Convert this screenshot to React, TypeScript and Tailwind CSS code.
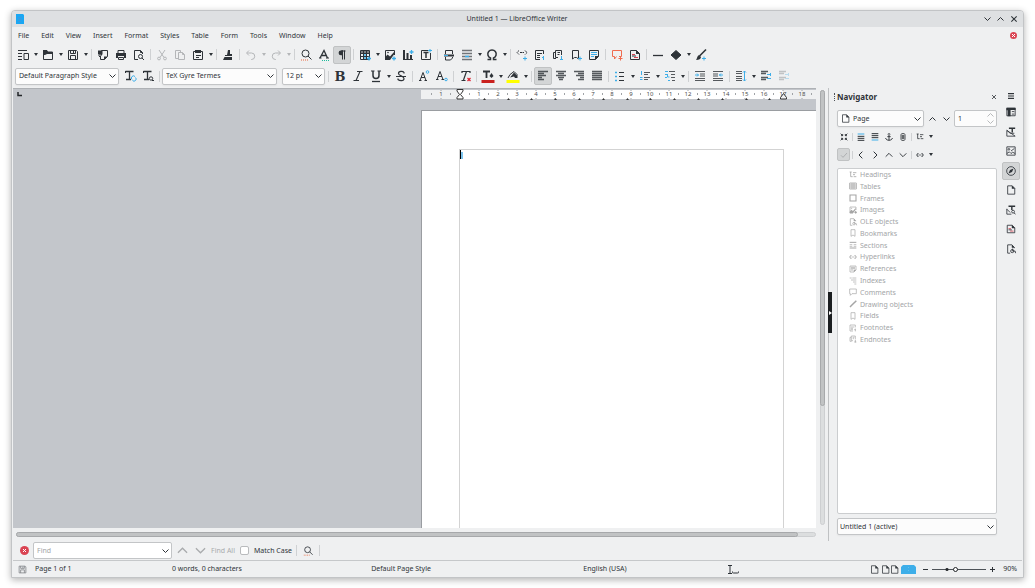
import React, { useState } from 'react';

const BLUE = '#3daee9';
const RED = '#da4453';

const menus = ['File', 'Edit', 'View', 'Insert', 'Format', 'Styles', 'Table', 'Form', 'Tools', 'Window', 'Help'];

const serif = '"DejaVu Serif", "Liberation Serif", serif';
const sans = '"Noto Sans", "Open Sans", sans-serif';

// All glyphs are drawn on a 12x12 grid
const icons: Record<string, React.ReactNode> = {
  templates: (
    <>
      <path d="M1 1.5h9M1 4.5h4M1 7.5h4M1 10.5h4" />
      <path d="M7 4.5h4.5v6H7z" />
    </>
  ),
  open: (
    <>
      <path d="M1.5 10.5v-9h3l1 1.5h5v7.5z" />
      <path d="M1 1h4l1 2h5v2H5L3 6H1z" fill="currentColor" stroke="none" />
    </>
  ),
  save: (
    <>
      <path d="M1.5 1.5h8l1 1v8h-9z" />
      <path d="M3.5 1.5v3h5v-3M3.5 10.5v-4h5v4M6.5 2v2" />
    </>
  ),
  exportPdf: (
    <>
      <path d="M4.5 6V1.5h6v6l-3 3h-4V8" />
      <path d="M1 1.5h4.5v4H1zM7 11V7.5h3.5z" fill="currentColor" stroke="none" />
      <path d="M3 5v2.500M1.5 6.5L3 8l1.500-1.500" />
    </>
  ),
  print: (
    <>
      <path d="M3 4V1.5h6V4M3.5 8.5v2h5v-2z" />
      <path d="M1 4h10v5H9V7H3v2H1z" fill="currentColor" stroke="none" />
    </>
  ),
  preview: (
    <>
      <path d="M5 10.5H1.5v-9h6l2 2V5" />
      <circle cx="7.5" cy="7.5" r="2" />
      <path d="M9 9l2 2M7.5 1.5v2h2" />
    </>
  ),
  cut: (
    <>
      <path d="M3 1l5 7.5M9 1L4 8.5" />
      <circle cx="3" cy="9.5" r="1.4" />
      <circle cx="9" cy="9.5" r="1.4" />
    </>
  ),
  copy: <path d="M4 9.5H1.5v-8h5v1.5M4.5 3.5h4l2 2v5h-6zM8.5 3.5v2h2" />,
  paste: (
    <>
      <path d="M1.5 2.5h9v8h-9z" />
      <path d="M3 1h6v3H3zM4 6h5v1H4zM4 8h3v1H4z" fill="currentColor" stroke="none" />
    </>
  ),
  clone: (
    <path d="M6 1h2v4h2v2H3V6h2zM2.5 8H10v3H1z" fill="currentColor" stroke="none" />
  ),
  undo: <path d="M4 1.5L1.5 4 4 6.5M2 4h4.5a3 3 0 0 1 0 6.5H6" />,
  redo: <path d="M8 1.5L10.5 4 8 6.5M10 4H5.5a3 3 0 0 0 0 6.5H6" />,
  find: (
    <>
      <circle cx="5.5" cy="4.5" r="3.5" />
      <path d="M8 7l3.5 3.5" />
      <path d="M1 11h7" stroke="#e9643a" strokeDasharray="1 1" />
    </>
  ),
  spelling: (
    <>
      <path d="M2 9l4-7.500L9.500 9M3.500 6.500h5" strokeWidth="1.300" />
      <path d="M1 9h2.500M8 9h3" />
      <path d="M4 11.5h7" stroke="#1abc9c" strokeDasharray="1 1" />
    </>
  ),
  marks: (
    <>
      <path d="M7 1.5H5a2.4 2.4 0 0 0 0 4.800h2z" fill="currentColor" stroke="none" />
      <path d="M6.5 1.5v9M8.5 1.5v9M5 2h4.5" />
    </>
  ),
  table: (
    <>
      <path d="M1.5 1.5h9v9h-9zM1.5 4.5h9M1.5 7.5h9M4.500 1.5v9M7.500 1.5v9" />
      <path d="M2 2h8v2H2z" fill="currentColor" stroke="none" opacity=".6" />
      <path d="M5 6h2M5 9h2" stroke={BLUE} strokeWidth="1.500" />
      <path d="M8 9.500h4M10 7.500v4" stroke={BLUE} strokeWidth="1.300" />
    </>
  ),
  image: (
    <>
      <path d="M10.500 6V1.5h-9v9H6" />
      <path d="M1 11V8.500l2.500-3 2.500 2L10 3v2.500L6 11z" fill="currentColor" stroke="none" />
      <circle cx="4" cy="3.500" r=".8" fill="currentColor" stroke="none" />
      <path d="M8 9.500h4M10 7.500v4" stroke={BLUE} strokeWidth="1.300" />
    </>
  ),
  chart: (
    <>
      <path d="M1 10.5h10" />
      <path d="M1 1h2v9H1zM4.500 4h2v6h-2zM8 6h2v4H8z" fill="currentColor" stroke="none" />
      <path d="M7.500 3h4M9.500 1v4" stroke={BLUE} strokeWidth="1.300" />
    </>
  ),
  textbox: (
    <>
      <path d="M8 1.5H1.5v9h9V4" />
      <path d="M3.5 3.5h5M6 3.5v5.500" strokeWidth="1.500" />
      <path d="M8 1.5h4M10 0v3.500" stroke={BLUE} />
    </>
  ),
  pagebreak: (
    <>
      <path d="M2.5 5V1.500h7V5M2.500 8v3h5l2-2V8" />
      <path d="M1 6.500h10" strokeWidth="2" />
      <path d="M1 6.500h4" stroke={BLUE} strokeWidth="1" />
    </>
  ),
  field: (
    <>
      <path d="M1 1.5h10M1 4.5h10M1 7.5h10M1 10.5h10" strokeWidth="1.5" opacity=".65" />
      <path d="M4 7.5h4" stroke={BLUE} strokeWidth="1.5" />
    </>
  ),
  omega: <path d="M1.5 10.5h3V9A4.200 4.200 0 1 1 7.5 9v1.5h3" strokeWidth="1.5" />,
  link: (
    <>
      <path d="M3 1.5l-2 2 2 2M9 1.5l2 2-2 2M4 3.5h4" strokeDasharray="2 .5" />
      <path d="M7 9.5h4M9 7.5v4" stroke={BLUE} />
    </>
  ),
  footnote: (
    <>
      <path d="M9.5 5V1.5h-8v9H6M3 4.5h5M3 6.5h3M3 8.500h3" />
      <path d="M9.5 7v4M8 8.5h1.5" stroke={BLUE} />
    </>
  ),
  endnote: (
    <>
      <path d="M4 9.5H1.5v-6H3M3.5 1.5h6V6M3.5 1.5v7H6M5.5 3.5h2.500M5.500 5.500h2" />
      <path d="M9.500 7v4M8 10.500h3" stroke={BLUE} />
    </>
  ),
  bookmarkAdd: (
    <>
      <path d="M2.5 1.5h6v8.500l-2-1.5h-2l-2 1.5z" />
      <path d="M8 9.500h4M10 7.500v4" stroke={BLUE} />
    </>
  ),
  crossref: (
    <>
      <path d="M1.5 1.5h9v6l-3 3h-6z" />
      <path d="M3 3.5h6M3 5.5h6M3 7.5h3" stroke={BLUE} />
      <path d="M7 11V7h4z" fill="currentColor" stroke="none" />
    </>
  ),
  comment: <path d="M1.5 1.5h9v6H8M1.5 1.5v6h2v2.5l2-2.5M7.5 9.500h4M9.500 7.500v4" stroke="#f06b4f" />,
  track: (
    <>
      <path d="M1.5 1.5h6l3 3v6h-9z" />
      <path d="M7 1v4h4z" fill="currentColor" stroke="none" />
      <path d="M3 5.5h3M5 8.5h4" stroke={RED} />
      <path d="M3 7h4" />
    </>
  ),
  line: <path d="M1 6.5h10" strokeWidth="1.300" />,
  shapes: <path d="M6 1.5L11 6l-5 4.5L1 6z" fill="currentColor" />,
  draw: (
    <>
      <path d="M11 .5L4.5 7" strokeWidth="1.6" />
      <path d="M4 6l2 2c0 2-2 3-5 3 1-1 1-4 3-5z" fill="currentColor" stroke="none" />
      <path d="M7 9.5h4M9 7.5v4" stroke={BLUE} />
    </>
  ),
  updateStyle: (
    <>
      <path d="M1.5 1.5h8M5.5 1.5v8M2 9.5h5" strokeWidth="1.3" />
      <path d="M1.500 1v2" />
      <path d="M8 9.5a2 2 0 0 1 3-3M11.5 7.5a2 2 0 0 1-3 3" stroke={BLUE} />
    </>
  ),
  newStyle: (
    <>
      <path d="M1.5 1.5h8M5.5 1.5v8M2 9.5h5" strokeWidth="1.3" />
      <path d="M1.500 1v2" />
      <circle cx="9" cy="8.500" r="1.7" />
      <path d="M10 10.5h2" />
    </>
  ),
  bold: (
    <text x="6" y="11" fontSize="13" fontWeight="700" textAnchor="middle" fontFamily={serif} fill="currentColor" stroke="none">B</text>
  ),
  italic: <path d="M5 1.5h5.5M1.5 10.5H7M8 1.5l-4 9" strokeWidth="1.100" />,
  underline: (
    <>
      <path d="M1 1h3.5M7.5 1H11" />
      <path d="M3 1v4.500a3 3 0 0 0 6 0V1" strokeWidth="1.500" />
      <path d="M2 11.500h8" strokeWidth="1.300" />
    </>
  ),
  strike: (
    <>
      <path d="M9 3.5v-1C8 1 3.5 .8 3.500 3.5S9 5.5 9 8.5 4.5 11 3 9.500v-1" strokeWidth="1.2" />
      <path d="M1 6.5h10" />
    </>
  ),
  superscript: (
    <>
      <path d="M1 10.5h2.500M6.500 10.500H9M2 10.500l3-8 3 8M3 7.500h4" />
      <circle cx="9.500" cy="2" r="1.300" stroke={BLUE} />
    </>
  ),
  subscript: (
    <>
      <path d="M0 9.5h2.500M5.500 9.500H8M1 9.500l3-8 3 8M2 6.500h4" />
      <circle cx="10" cy="9.500" r="1.300" stroke={BLUE} />
    </>
  ),
  clear: (
    <>
      <path d="M3 1.500h8M3 1v2M11 1v2M7.500 1.500l-3 8.500M2.500 10.500h4" strokeWidth="1.200" />
      <path d="M8.500 8l3 3M11.500 8l-3 3" stroke="#e0202f" strokeWidth="1.200" />
    </>
  ),
  fontColor: (
    <>
      <path d="M1 1.500h7M4.500 1.500v6.500" strokeWidth="1.800" />
      <path d="M9.500 3l2 3-2 2-2-2z" fill="currentColor" stroke="none" />
      <path d="M-.5 11.500h13" stroke="#c9211e" strokeWidth="3" />
    </>
  ),
  highlight: (
    <>
      <path d="M1 8l2-3.500 4-3 3 3V8" />
      <path d="M3 7.500l4-5 3 3V8H8L7 6.500z" fill="currentColor" stroke="none" />
      <path d="M-.5 11.500h13" stroke="#ffff00" strokeWidth="3" />
    </>
  ),
  alignLeft: <path d="M1 1.5h10M1 3.5h6M1 5.5h8M1 7.5h4M1 9.5h6" strokeWidth="1.3" opacity=".8" />,
  alignCenter: <path d="M1 1.5h10M3 3.5h6M1 5.5h10M3 7.5h6M4 9.5h4" strokeWidth="1.3" opacity=".8" />,
  alignRight: <path d="M1 1.5h10M5 3.5h6M3 5.5h8M7 7.5h4M5 9.5h6" strokeWidth="1.3" opacity=".8" />,
  justify: <path d="M1 1.5h10M1 3.5h10M1 5.5h10M1 7.5h10M1 9.5h10" strokeWidth="1.3" opacity=".8" />,
  bullets: (
    <>
      <path d="M5 2.5h5M5 6.5h5M5 10.5h5" />
      <path d="M1 2.5h2M1 6.5h2M1 10.5h2" stroke={BLUE} strokeWidth="1.6" />
    </>
  ),
  numbering: (
    <>
      <path d="M5 2.5h6M5 4.5h4M5 7.5h6M5 9.5h4" strokeWidth="1.2" opacity=".8" />
      <path d="M2.500 1v4M1 7.500h2.500M1 9.500h2.500" stroke={BLUE} />
    </>
  ),
  outline: (
    <>
      <path d="M5 1.5h6M7 4.5h4M7 7.5h4M8 10.5h3" strokeWidth="1.2" opacity=".8" />
      <path d="M1 1.5h3M1 4.500h2M3.5 4v3h2M1 7.5h2M4 10.5h2" stroke={BLUE} />
    </>
  ),
  indent: (
    <>
      <path d="M1 1.5h10M6 4h5M6 6h5M1 10.5h10M1 8.5h10" strokeWidth="1.2" opacity=".8" />
      <path d="M1 5h3.500M3 3.500L4.500 5 3 6.500" stroke={BLUE} />
    </>
  ),
  outdent: (
    <>
      <path d="M1 1.5h10M1 4h5M1 6h5M1 10.5h10M1 8.5h10" strokeWidth="1.2" opacity=".8" />
      <path d="M7 5h4M9 3.500L7.500 5 9 6.500" stroke={BLUE} />
    </>
  ),
  spacing: (
    <>
      <path d="M1 1.500h6M1 3.500h6M1 6.500h6M1 8.500h6M1 10.500h6" opacity=".8" />
      <path d="M9.500 1v10M8 2.500L9.500 1 11 2.500M8 9.500L9.500 11 11 9.500" stroke={BLUE} />
    </>
  ),
  increase: (
    <>
      <path d="M1 1.500h7M1 3.500h5M1 7.500h7M1 9.500h5" strokeWidth="1.5" opacity=".8" />
      <path d="M7 4.500h4M7 8.500h4M10.500 3v3" stroke={BLUE} />
    </>
  ),
  contract: (
    <path
      d="M1 1l3 3M4 1.5V4H1.5M11 1L8 4M8 1.5V4h2.5M1 11l3-3M4 10.5V8H1.5M11 11L8 8M8 10.5V8h2.5"
      strokeWidth="1.4"
    />
  ),
  header: (
    <>
      <path d="M1 5h10M1 8h10M1 11h10" strokeWidth="1.5" />
      <path d="M1 1.500h10" stroke={BLUE} strokeWidth="1.5" />
    </>
  ),
  footer: (
    <>
      <path d="M1 1h10M1 4h10M1 7h10" strokeWidth="1.5" />
      <path d="M1 10.500h10" stroke={BLUE} strokeWidth="1.5" />
    </>
  ),
  anchor: (
    <>
      <circle cx="6" cy="2" r="1.4" />
      <path d="M6 3.500v7.500M3.5 5.500h5M1 7.500c0 4.500 10 4.500 10 0" strokeWidth="1.4" />
    </>
  ),
  clip: <path d="M3 2.5L4 1h4l1 1.5v7L8 11H4L3 9.500zM5 3v6M7 3v6" strokeWidth="1.3" />,
  levels: <path d="M1 1.5h3M2.5 1.5v7h3M6 2.5h5M6 5.5h3M7 8.5h4" strokeWidth="1.2" />,
  check: <path d="M1.5 6.5l3 3 6-6.500" />,
  left: <path d="M8 1L3 6l5 5" strokeWidth="1.5" />,
  right: <path d="M4 1l5 5-5 5" strokeWidth="1.5" />,
  up: <path d="M1 8.500l5-5 5 5" strokeWidth="1.4" />,
  down: <path d="M1 3.500l5 5 5-5" strokeWidth="1.4" />,
  linkNav: <path d="M3.5 3L1 6l2.5 3M8.5 3L11 6 8.500 9M4 6h1.500M6.500 6H8" strokeWidth="1.5" />,
  close: <path d="M2 2l8 8M10 2l-8 8" strokeWidth="1.6" />,
  hamburger: <path d="M1.5 2.500h9M1.500 6h9M1.500 9.500h9" strokeWidth="1.7" />,
  properties: (
    <>
      <path d="M1 1.5h10v9H1zM7 5.500h3M7 8.500h3" />
      <path d="M.5 1h11v2.500H5.500V11H2V4H.5z" fill="currentColor" stroke="none" />
    </>
  ),
  styles: (
    <>
      <path d="M3.500 1.500H11M7.500 1.500v5" strokeWidth="1.700" />
      <path d="M1 4v7h10zM1 4l4 3.500h5" />
    </>
  ),
  gallery: (
    <>
      <path d="M1 1h10v10H1zM1 9l3-2 2 2 2-1.500L11 9" />
      <circle cx="3.500" cy="4" r="1" />
      <path d="M6 6l4-3" />
    </>
  ),
  compass: (
    <>
      <circle cx="6" cy="6" r="5.200" />
      <path d="M9 3L7.200 7.200 3 9l1.800-4.200z" fill="currentColor" stroke="none" />
    </>
  ),
  page: (
    <>
      <path d="M2 1h5.500L10.500 4v7H2z" />
      <path d="M7 .5v4h4z" fill="currentColor" stroke="none" />
    </>
  ),
  inspector: (
    <>
      <path d="M3 1.500h8M7 1.500V6" strokeWidth="1.700" />
      <path d="M1 4.500V11h5.500M1 5l4 4" />
      <circle cx="8.500" cy="8" r="1.700" />
      <path d="M9.500 9.500l2 1.500" />
    </>
  ),
  access: (
    <>
      <path d="M5 11H2V1h5l3 3v1" />
      <path d="M7 .5v4h3.500z" fill="currentColor" stroke="none" />
      <circle cx="7.500" cy="8.500" r="1.900" />
      <path d="M8 5.500v3h3l.5 2.500" />
    </>
  ),
  frame: <path d="M1.500 1.500h9v9h-9z" strokeWidth="1.6" />,
  grid: <path d="M1 1.500h10v9H1zM1 4.500h10M1 7.500h10M4.500 1.500v9M7.500 1.500v9" strokeWidth="1.200" />,
  bookmark: <path d="M3 1h6v10L6 9l-3 2z" />,
  section: (
    <>
      <path d="M1 2h10M1 10.5h10" strokeWidth="1.5" />
      <path d="M1 5.5h4M7 5.5h4M1 8h4M7 8h4" />
    </>
  ),
  index: <path d="M1 1.5h3M5 1.5h6M3 4.5h8M6 7.5h5M8 10.5h3" />,
  bubble: <path d="M1 1.500h10v7H4.500L2 11V8.500H1z" />,
  pen: <path d="M11 1L4 8l-2.500 2.500" strokeWidth="2.200" />,
};

const Icon: React.FC<{ name: string; size?: number }> = ({ name, size = 12 }) => (
  <svg
    width={size}
    height={size}
    viewBox="0 0 12 12"
    fill="none"
    stroke="currentColor"
    className="shrink-0 overflow-visible"
    aria-hidden="true"
  >
    {icons[name]}
  </svg>
);

const Chevron: React.FC<{ up?: boolean }> = ({ up }) => (
  <svg width="7" height="4" viewBox="0 0 7 4" fill="none" stroke="currentColor" className="shrink-0" aria-hidden="true">
    <path d={up ? 'M.5 3.5l3-3 3 3' : 'M.5 .5l3 3 3-3'} />
  </svg>
);

interface Tool {
  icon: string;
  label: string;
  menu?: boolean;
  disabled?: boolean;
  active?: boolean;
}

const standardTools: (Tool | null)[] = [
  { icon: 'templates', label: 'New', menu: true },
  { icon: 'open', label: 'Open', menu: true },
  { icon: 'save', label: 'Save', menu: true },
  null,
  { icon: 'exportPdf', label: 'Export as PDF' },
  { icon: 'print', label: 'Print' },
  { icon: 'preview', label: 'Print Preview' },
  null,
  { icon: 'cut', label: 'Cut', disabled: true },
  { icon: 'copy', label: 'Copy', disabled: true },
  { icon: 'paste', label: 'Paste', menu: true },
  null,
  { icon: 'clone', label: 'Clone Formatting' },
  null,
  { icon: 'undo', label: 'Undo', menu: true, disabled: true },
  { icon: 'redo', label: 'Redo', menu: true, disabled: true },
  null,
  { icon: 'find', label: 'Find and Replace' },
  { icon: 'spelling', label: 'Spelling' },
  { icon: 'marks', label: 'Formatting Marks', active: true },
  null,
  { icon: 'table', label: 'Insert Table', menu: true },
  { icon: 'image', label: 'Insert Image' },
  { icon: 'chart', label: 'Insert Chart' },
  { icon: 'textbox', label: 'Insert Text Box' },
  null,
  { icon: 'pagebreak', label: 'Insert Page Break' },
  { icon: 'field', label: 'Insert Field', menu: true },
  { icon: 'omega', label: 'Insert Special Character', menu: true },
  null,
  { icon: 'link', label: 'Insert Hyperlink' },
  { icon: 'footnote', label: 'Insert Footnote' },
  { icon: 'endnote', label: 'Insert Endnote' },
  { icon: 'bookmarkAdd', label: 'Insert Bookmark' },
  { icon: 'crossref', label: 'Insert Cross-reference' },
  null,
  { icon: 'comment', label: 'Insert Comment' },
  { icon: 'track', label: 'Track Changes' },
  null,
  { icon: 'line', label: 'Insert Line' },
  { icon: 'shapes', label: 'Basic Shapes', menu: true },
  { icon: 'draw', label: 'Show Draw Functions' },
];

const formatTools: (Tool | null)[] = [
  { icon: 'bold', label: 'Bold' },
  { icon: 'italic', label: 'Italic' },
  { icon: 'underline', label: 'Underline', menu: true },
  { icon: 'strike', label: 'Strikethrough' },
  null,
  { icon: 'superscript', label: 'Superscript' },
  { icon: 'subscript', label: 'Subscript' },
  null,
  { icon: 'clear', label: 'Clear Formatting' },
  null,
  { icon: 'fontColor', label: 'Font Color', menu: true },
  { icon: 'highlight', label: 'Highlighting', menu: true },
  null,
  { icon: 'alignLeft', label: 'Align Left', active: true },
  { icon: 'alignCenter', label: 'Align Center' },
  { icon: 'alignRight', label: 'Align Right' },
  { icon: 'justify', label: 'Justified' },
  null,
  { icon: 'bullets', label: 'Bullets', menu: true },
  { icon: 'numbering', label: 'Numbering', menu: true },
  { icon: 'outline', label: 'Outline Format', menu: true },
  null,
  { icon: 'indent', label: 'Increase Indent' },
  { icon: 'outdent', label: 'Decrease Indent' },
  null,
  { icon: 'spacing', label: 'Line Spacing', menu: true },
  { icon: 'increase', label: 'Increase Paragraph Spacing' },
  { icon: 'increase', label: 'Decrease Paragraph Spacing', disabled: true },
];

const ToolRow: React.FC<{ tools: (Tool | null)[] }> = ({ tools }) => (
  <div className="flex items-center">
    {tools.map((tool, i) =>
      tool === null ? (
        <span key={i} className="flex w-[5px] justify-center">
          <span className="h-[11px] w-px bg-[#cfd1d3]" />
        </span>
      ) : (
        <React.Fragment key={i}>
          <button
            type="button"
            aria-label={tool.label}
            disabled={tool.disabled}
            className={`flex h-[18px] w-[18px] items-center justify-center rounded-[2px] disabled:opacity-30 ${
              tool.active ? 'border border-[#c0c2c3] bg-[#d3d5d6]' : ''
            }`}
          >
            <Icon name={tool.icon} />
          </button>
          {tool.menu && (
            <button
              type="button"
              aria-label={`${tool.label} options`}
              disabled={tool.disabled}
              className="flex h-[18px] w-[7px] items-center justify-center disabled:opacity-30"
            >
              <svg width="4" height="3" viewBox="0 0 4 3" fill="currentColor" aria-hidden="true">
                <path d="M0 0h4L2 3z" />
              </svg>
            </button>
          )}
        </React.Fragment>
      )
    )}
  </div>
);

const Combo: React.FC<{ label: string; value: string; className: string; selectClass?: string; icon?: string }> = ({
  label,
  value,
  className,
  selectClass = 'pl-[3px]',
  icon,
}) => (
  <div className={`relative flex h-[17px] items-center rounded-[2px] border border-[#c3c5c7] bg-[#fcfcfc] shadow-xs ${className}`}>
    {icon && (
      <span className="pointer-events-none absolute left-[3px]">
        <Icon name={icon} size={9} />
      </span>
    )}
    <select aria-label={label} className={`h-full w-full appearance-none bg-transparent outline-none ${selectClass}`}>
      <option>{value}</option>
    </select>
    <span className="pointer-events-none absolute right-[2px]">
      <Chevron />
    </span>
  </div>
);

const navItems = [
  { icon: 'levels', label: 'Headings' },
  { icon: 'grid', label: 'Tables' },
  { icon: 'frame', label: 'Frames' },
  { icon: 'image', label: 'Images' },
  { icon: 'access', label: 'OLE objects' },
  { icon: 'bookmark', label: 'Bookmarks' },
  { icon: 'section', label: 'Sections' },
  { icon: 'linkNav', label: 'Hyperlinks' },
  { icon: 'crossref', label: 'References' },
  { icon: 'index', label: 'Indexes' },
  { icon: 'bubble', label: 'Comments' },
  { icon: 'pen', label: 'Drawing objects' },
  { icon: 'bookmark', label: 'Fields' },
  { icon: 'footnote', label: 'Footnotes' },
  { icon: 'endnote', label: 'Endnotes' },
];

const sideTabs = [
  { icon: 'properties', label: 'Properties' },
  { icon: 'styles', label: 'Styles' },
  { icon: 'gallery', label: 'Gallery' },
  { icon: 'compass', label: 'Navigator' },
  { icon: 'page', label: 'Page' },
  { icon: 'inspector', label: 'Style Inspector' },
  { icon: 'track', label: 'Manage Changes' },
  { icon: 'access', label: 'Accessibility Check' },
];

const SmallButton: React.FC<{ icon: string; label: string }> = ({ icon, label }) => (
  <button type="button" aria-label={label} className="flex h-[13px] w-[14px] items-center justify-center">
    <Icon name={icon} size={8} />
  </button>
);

const SmallArrow: React.FC<{ label: string }> = ({ label }) => (
  <button type="button" aria-label={label} className="flex h-[13px] w-[7px] items-center justify-center">
    <svg width="4" height="3" viewBox="0 0 4 3" fill="currentColor" aria-hidden="true">
      <path d="M0 0h4L2 3z" />
    </svg>
  </button>
);

const SmallSep = () => <span className="mx-px h-[8px] w-px bg-[#cfd1d3]" />;

// One centimetre is 19 units, zero sits at the left text margin
const Ruler = () => {
  const unit = 19;
  const zero = 39;
  const numbers = Array.from({ length: 20 }, (_, i) => i - 1).filter((n) => n !== 0 && n < 19);
  const halves = Array.from({ length: 21 }, (_, i) => zero + (i - 2) * unit + 9).filter((x) => x > 4 && x < 392);
  const tabs = Array.from({ length: 13 }, (_, i) => zero + Math.round((i + 1) * 23.8));

  return (
    <svg width="395" height="11" viewBox="0 0 395 11" className="block overflow-visible" role="img" aria-label="Ruler">
      <rect x="0" y="0" width="395" height="9" fill="#eff0f1" />
      <rect x={zero} y="0" width={17 * unit} height="9" fill="#fff" />
      {halves.map((x) => (
        <path key={x} d={`M${x + 0.5} 3v2`} stroke="#a0a3a6" />
      ))}
      {numbers.map((n) => (
        <g key={n}>
          <path d={`M${zero + n * unit} 0v1M${zero + n * unit} 8v1`} stroke="#a0a3a6" />
          <text x={zero + n * unit} y="6" fontSize="6" textAnchor="middle" fill="#4d4d4d" fontFamily={sans}>
            {Math.abs(n)}
          </text>
        </g>
      ))}
      {tabs.map((x) => (
        <path key={x} d={`M${x - 1} 10l1.500-2 1.500 2z`} fill="#333" />
      ))}
      <path d="M36-.5h6v1.500L39.500 4.500 42 7.500V9h-6V7.500l2.500-3L36 1z" fill="#fff" stroke="#333" />
      <path d="M359.5 9V7.500L362.500 3.500l3 4V9z" fill="#eff0f1" stroke="#333" />
    </svg>
  );
};

const NavigatorPanel = () => {
  const [page, setPage] = useState('1');

  return (
    <section className="flex w-[160px] flex-col">
      <div className="flex h-[17px] items-center justify-between">
        <h2 className="text-[8px] font-bold">Navigator</h2>
        <button type="button" aria-label="Close Sidebar Deck" className="flex w-[6px]">
          <Icon name="close" size={6} />
        </button>
      </div>

      <div className="mt-[5px] flex h-[17px] items-center">
        <Combo label="Navigate by" value="Page" icon="page" className="w-[87px]" selectClass="pl-[15px]" />
        <div className="flex flex-1 items-center justify-center gap-[7px]">
          <button type="button" aria-label="Previous page">
            <Chevron up />
          </button>
          <button type="button" aria-label="Next page">
            <Chevron />
          </button>
        </div>
        <div className="flex h-[17px] w-[43px] items-center rounded-[2px] border border-[#c3c5c7] bg-[#fcfcfc] pr-[2px]">
          <input
            aria-label="Page number"
            value={page}
            onChange={(e) => setPage(e.target.value)}
            className="w-full min-w-0 bg-transparent pl-[3px] outline-none"
          />
          <span className="flex flex-col gap-[3px] text-[#b8babc]">
            <Chevron up />
            <Chevron />
          </span>
        </div>
      </div>

      <div className="mt-[3px] flex h-[13px] items-center">
        <SmallButton icon="contract" label="Collapse" />
        <SmallSep />
        <SmallButton icon="header" label="Header" />
        <SmallButton icon="footer" label="Footer" />
        <SmallButton icon="anchor" label="Anchor" />
        <SmallButton icon="clip" label="Set Reminder" />
        <SmallSep />
        <SmallButton icon="levels" label="Heading Levels" />
        <SmallArrow label="Heading Levels options" />
      </div>

      <div className="mt-[5px] flex h-[13px] items-center">
        <button
          type="button"
          aria-label="Content View"
          className="mr-px flex h-[13px] w-[13px] items-center justify-center rounded-[2px] border border-[#c0c2c3] bg-[#d3d5d6] text-[#9a9c9e]"
        >
          <Icon name="check" size={8} />
        </button>
        <SmallSep />
        <SmallButton icon="left" label="Back" />
        <SmallButton icon="right" label="Forward" />
        <SmallButton icon="up" label="Promote" />
        <SmallButton icon="down" label="Demote" />
        <SmallSep />
        <SmallButton icon="linkNav" label="Drag Mode" />
        <SmallArrow label="Drag Mode options" />
      </div>

      <div className="mt-[7px] flex-1 rounded-[2px] border border-[#cbcdcf] bg-white text-[#a3a5a7]">
        <ul className="flex h-[176px] flex-col justify-between pl-[11px] [&_svg]:grayscale">
          {navItems.map((item) => (
            <li key={item.label} className="flex items-center gap-[3px] leading-[11px]">
              <Icon name={item.icon} size={8} />
              {item.label}
            </li>
          ))}
        </ul>
      </div>

      <Combo label="Document" value="Untitled 1 (active)" className="mt-[4px] mb-[6px] w-full" selectClass="pl-[2px]" />
    </section>
  );
};

const App: React.FC = () => {
  const [find, setFind] = useState('');
  const [zoom, setZoom] = useState(43);

  return (
    <div className="flex min-h-screen bg-white px-[11px] py-[10px] font-['Noto_Sans',sans-serif] text-[7px] leading-[10px] text-[#2e3338]">
      <div className="flex min-w-0 flex-1 flex-col rounded-t-[4px] border border-[#c2c4c6] bg-[#eff0f1] shadow-[0_2px_7px_rgba(0,0,0,0.3)]">
        {/* Title bar */}
        <header className="flex h-[16px] items-center justify-between rounded-t-[3px] bg-[#dee0e2] pr-[5px] pl-[4px]">
          <div className="flex flex-1">
            <svg width="8" height="10" viewBox="0 0 8 10" aria-hidden="true">
              <path d="M0 0h7l1 1v9H0z" fill="#1aa7f3" />
              <path d="M2 3.5h4M2 5.5h4M2 7.5h3" stroke="#3f97dc" />
            </svg>
          </div>
          <h1>Untitled 1 — LibreOffice Writer</h1>
          <div className="flex flex-1 items-center justify-end gap-[6px]">
            <button type="button" aria-label="Minimize">
              <Chevron />
            </button>
            <button type="button" aria-label="Maximize">
              <Chevron up />
            </button>
            <button type="button" aria-label="Close">
              <Icon name="close" size={8} />
            </button>
          </div>
        </header>

        {/* Menu bar */}
        <nav className="flex h-[17px] items-center justify-between pr-[6px]">
          <div className="flex">
            {menus.map((menu) => (
              <button key={menu} type="button" className="px-[6px]">
                {menu}
              </button>
            ))}
          </div>
          <button type="button" aria-label="Close Document">
            <svg width="7" height="7" viewBox="0 0 7 7" aria-hidden="true">
              <circle cx="3.5" cy="3.5" r="3.5" fill={RED} />
              <path d="M2 2l3 3M5 2L2 5" stroke="#fff" />
            </svg>
          </button>
        </nav>

        {/* Toolbars */}
        <div className="flex h-[21px] items-center pl-[2px]">
          <ToolRow tools={standardTools} />
        </div>
        <div className="flex h-[22px] items-center pl-[3px]">
          <Combo label="Paragraph style" value="Default Paragraph Style" className="w-[104px]" />
          <div className="flex w-[43px] items-center pl-[2px]">
            <ToolRow
              tools={[
                { icon: 'updateStyle', label: 'Update Selected Style' },
                { icon: 'newStyle', label: 'New Style from Selection' },
                null,
              ]}
            />
          </div>
          <Combo label="Font name" value="TeX Gyre Termes" className="w-[115px]" />
          <Combo label="Font size" value="12 pt" className="ml-[5px] w-[43px]" />
          <div className="flex pl-[1px]">
            <ToolRow tools={[null, ...formatTools]} />
          </div>
        </div>

        {/* Document and sidebar */}
        <div className="flex flex-1 pt-[1px]">
          <div className="flex min-w-0 flex-1 flex-col pl-[1px]">
            <main className="flex flex-1 border-t border-[#aeb1b5] bg-[#c3c6cb]">
              <div className="flex-1 pt-[3px] pl-[4px]">
                <svg width="5" height="5" viewBox="0 0 5 5" aria-hidden="true">
                  <path d="M1 0v3.500h4" fill="none" stroke="#232629" strokeWidth="1.500" />
                </svg>
              </div>
              <div className="flex w-[395px] flex-col pt-px">
                <Ruler />
                <div className="mt-[9px] flex flex-1 border-t border-l border-[#9a9da1] bg-white pt-[38px] pr-[32px] pl-[37px]">
                  <div className="flex flex-1 border border-b-0 border-[#d3d3d3]">
                    <span className="h-[9px] w-px bg-black" />
                    <span className="mt-[2px] h-[7px] w-[2px] bg-[#7cc4ee]" />
                  </div>
                </div>
              </div>
            </main>
            <div className="flex h-[13px] pt-[4px] pl-[3px]">
              <div className="h-[5px] flex-1 rounded-full border border-[#cdcfd1] bg-[#dcdedf]">
                <div className="-mt-px -ml-px h-[5px] w-[98%] rounded-full border border-[#a7a9ab] bg-[#c1c3c4]" />
              </div>
            </div>
          </div>

          <div className="flex w-[12px] justify-center pt-[2px] pb-[16px]">
            <div className="w-[5px] rounded-full border border-[#cdcfd1] bg-[#dcdedf]">
              <div className="-mt-px -ml-px h-[73%] w-[5px] rounded-full border border-[#a7a9ab] bg-[#c1c3c4]" />
            </div>
          </div>

          <aside className="relative flex border-l border-[#bfc1c3] pl-[8px]">
            <button
              type="button"
              aria-label="Hide sidebar"
              className="absolute top-[204px] left-[-1px] flex h-[41px] w-[4px] items-center justify-center bg-[#1b1e20]"
            >
              <svg width="3" height="4" viewBox="0 0 3 4" fill="#fff" aria-hidden="true">
                <path d="M0 0l3 2-3 2z" />
              </svg>
            </button>
            <span className="absolute top-[5px] left-[5px] h-[8px] border-l border-dotted border-[#4d5257]" />
            <NavigatorPanel />
            <div className="flex w-[26px] flex-col items-center pl-[2px]">
              <button type="button" aria-label="Sidebar Settings" className="flex h-[15px] items-center">
                <Icon name="hamburger" size={8} />
              </button>
              <div className="flex h-[155px] flex-col justify-between">
                {sideTabs.map((tab) => (
                  <button
                    key={tab.label}
                    type="button"
                    aria-label={tab.label}
                    className={`flex h-[18px] w-[18px] items-center justify-center rounded-[2px] ${
                      tab.label === 'Navigator' ? 'border border-[#c0c2c3] bg-[#d3d5d6]' : ''
                    }`}
                  >
                    <Icon name={tab.icon} size={10} />
                  </button>
                ))}
              </div>
            </div>
          </aside>
        </div>

        {/* Find bar */}
        <div className="flex h-[19px] items-center pl-[8px]">
          <button type="button" aria-label="Close Find Bar">
            <svg width="9" height="9" viewBox="0 0 9 9" aria-hidden="true">
              <circle cx="4.5" cy="4.5" r="4.5" fill={RED} />
              <path d="M3 3l3 3M6 3L3 6" stroke="#fff" />
            </svg>
          </button>
          <div className="relative ml-[4px] flex h-[17px] w-[139px] items-center rounded-[2px] border border-[#c3c5c7] bg-white">
            <input
              aria-label="Find"
              placeholder="Find"
              value={find}
              onChange={(e) => setFind(e.target.value)}
              className="w-full bg-transparent pl-[3px] outline-none placeholder:text-[#a3a5a7]"
            />
            <span className="absolute right-[2px]">
              <Chevron />
            </span>
          </div>
          <div className="ml-[5px] flex items-center gap-[5px] text-[#a9abad]">
            <div className="flex gap-[7px]">
              <button type="button" aria-label="Find Previous">
                <Icon name="up" size={11} />
              </button>
              <button type="button" aria-label="Find Next">
                <Icon name="down" size={11} />
              </button>
            </div>
            <button type="button" disabled>
              Find All
            </button>
          </div>
          <label className="ml-[5px] flex items-center gap-[5px]">
            <input type="checkbox" className="h-[9px] w-[9px] appearance-none rounded-[2px] border border-[#b9bbbd] bg-white" />
            Match Case
          </label>
          <span className="ml-[4px] h-[11px] w-px bg-[#cfd1d3]" />
          <button type="button" aria-label="Find and Replace" className="mx-[6px]">
            <Icon name="find" size={10} />
          </button>
          <span className="h-[11px] w-px bg-[#cfd1d3]" />
        </div>

        {/* Status bar */}
        <footer className="mx-px flex h-[17px] items-center border-t border-[#c6c8ca] pr-[5px] pl-[5px]">
          <span className="text-[#7b7e81]">
            <Icon name="save" size={9} />
          </span>
          <span className="w-[137px] pl-[8px]">Page 1 of 1</span>
          <span className="flex-[141] pl-[8px]">0 words, 0 characters</span>
          <span className="flex-[174] text-center">Default Page Style</span>
          <span className="flex-[232] text-center">English (USA)</span>
          <span className="flex-[142] pl-[6px]">
            <svg width="11" height="9" viewBox="0 0 11 9" fill="none" stroke="currentColor" aria-hidden="true">
              <path d="M0 .5h4M0 8.5h4M2 .5v8M4.5 6.500c0 1.500 0 1.500 1 1.500h4c1 0 1 0 1-1.500" />
            </svg>
          </span>
          <div className="flex items-center gap-[2px]">
            <button type="button" aria-label="Single-page view">
              <Icon name="page" size={9} />
            </button>
            <button type="button" aria-label="Multiple-page view" className="flex">
              <Icon name="page" size={9} />
              <Icon name="page" size={9} />
            </button>
            <button type="button" aria-label="Book view">
              <svg width="15" height="9" viewBox="0 0 15 9" aria-hidden="true">
                <path d="M2 0h11l2 2v7H0V2z" fill={BLUE} />
                <path d="M7.5 2v6" stroke="#63bdec" strokeDasharray="1 2" />
              </svg>
            </button>
          </div>
          <button type="button" aria-label="Zoom Out" className="ml-[7px]">
            <svg width="5" height="5" viewBox="0 0 5 5" stroke="currentColor" aria-hidden="true">
              <path d="M0 2.5h5" />
            </svg>
          </button>
          <input
            type="range"
            aria-label="Zoom"
            min={0}
            max={100}
            value={zoom}
            onChange={(e) => setZoom(Number(e.target.value))}
            className="mx-[4px] h-[5px] w-[54px] appearance-none bg-[radial-gradient(circle_at_15px_2.5px,#232629_1px,transparent_2px),linear-gradient(transparent_2px,#4d5257_2px,#4d5257_3px,transparent_3px)] [&::-webkit-slider-thumb]:h-[5px] [&::-webkit-slider-thumb]:w-[5px] [&::-webkit-slider-thumb]:appearance-none [&::-webkit-slider-thumb]:rounded-full [&::-webkit-slider-thumb]:border [&::-webkit-slider-thumb]:border-[#232629] [&::-webkit-slider-thumb]:bg-white"
          />
          <button type="button" aria-label="Zoom In">
            <svg width="5" height="5" viewBox="0 0 5 5" stroke="currentColor" aria-hidden="true">
              <path d="M0 2.5h5M2.5 0v5" />
            </svg>
          </button>
          <span className="ml-[8px]">90%</span>
        </footer>
      </div>
    </div>
  );
};

export default App;
